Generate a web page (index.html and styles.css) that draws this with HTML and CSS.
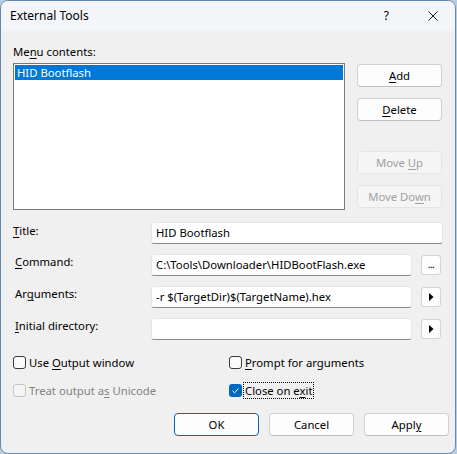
FILE: index.html
```html
<!DOCTYPE html>
<html>
<head>
<meta charset="utf-8">
<link rel="stylesheet" href="styles.css">
</head>
<body>
<div class="window">
  <div class="titlebar">
    <span class="title">External Tools</span>
    <span class="help">?</span>
    <span class="close"><svg width="10" height="10" viewBox="0 0 10 10"><path d="M0.5 0.5 L9.5 9.5 M9.5 0.5 L0.5 9.5" stroke="#1a1a1a" stroke-width="1" fill="none"/></svg></span>
  </div>
  <div class="content">
    <div class="top">
      <div class="listcol">
        <div class="label">Me<u>n</u>u contents:</div>
        <div class="listbox">
          <div class="item selected">HID Bootflash</div>
        </div>
      </div>
      <div class="sidebuttons">
        <div class="btn"><span><u>A</u>dd</span></div>
        <div class="btn"><span><u>D</u>elete</span></div>
        <div class="btn disabled gap-big"><span>Move <u>U</u>p</span></div>
        <div class="btn disabled"><span>Move Do<u>w</u>n</span></div>
      </div>
    </div>
    <div class="fields">
      <div class="flabel first"><u>T</u>itle:</div>
      <div class="input wide">HID Bootflash</div>
      <div class="flabel"><u>C</u>ommand:</div>
      <div class="input">C:\Tools\Downloader\HIDBootFlash.exe</div>
      <div class="minibtn dots">...</div>
      <div class="flabel">Ar<u>g</u>uments:</div>
      <div class="input">-r $(TargetDir)$(TargetName).hex</div>
      <div class="minibtn"><svg width="5" height="8" viewBox="0 0 5 8"><polygon points="0,0 4.5,4 0,8" fill="#000"/></svg></div>
      <div class="flabel"><u>I</u>nitial directory:</div>
      <div class="input"></div>
      <div class="minibtn"><svg width="5" height="8" viewBox="0 0 5 8"><polygon points="0,0 4.5,4 0,8" fill="#000"/></svg></div>
    </div>
    <div class="checks">
      <div class="check"><span class="box"></span><span class="ctext">Use <u>O</u>utput window</span></div>
      <div class="check"><span class="box"></span><span class="ctext"><u>P</u>rompt for arguments</span></div>
      <div class="check disabled"><span class="box"></span><span class="ctext">Treat output a<u>s</u> Unicode</span></div>
      <div class="check checked"><span class="box"><svg width="13" height="13" viewBox="0 0 13 13"><path d="M3.5 6.8 L5.6 8.8 L9.5 4.5" stroke="#fff" stroke-width="1" fill="none"/></svg></span><span class="ctext focus">Close on e<u>x</u>it</span></div>
    </div>
    <div class="footer">
      <div class="btn default"><span>OK</span></div>
      <div class="btn"><span>Cancel</span></div>
      <div class="btn"><span>Appl<u>y</u></span></div>
    </div>
  </div>
</div>
</body>
</html>
```
FILE: styles.css
```css
html, body {
  margin: 0;
  padding: 0;
}
body {
  background: #b9cde2;
  width: 457px;
  height: 454px;
  font-family: "Noto Sans", "Open Sans", sans-serif;
  font-size: 11.3px;
  color: #000;
}
u {
  text-decoration-thickness: 1px;
  text-underline-offset: 2px;
}
.window {
  box-sizing: border-box;
  width: 456px;
  height: 454px;
  border: 1px solid #6488b0;
  border-radius: 8px;
  overflow: hidden;
  background: #f0f0f0;
  display: flex;
  flex-direction: column;
}
.titlebar {
  height: 30px;
  background: #f3f5f9;
  display: flex;
  align-items: center;
  flex: none;
}
.title {
  margin-left: 9px;
  font-size: 12px;
  margin-top: -2px;
}
.help {
  margin-left: auto;
  font-size: 12px;
  margin-top: -2px;
}
.close {
  width: 10px;
  height: 10px;
  margin-left: 39px;
  margin-right: 17px;
  margin-top: -1px;
  display: flex;
}
.content {
  padding: 13px 11px 0 12px;
}
.top {
  display: flex;
  gap: 12px;
}
.listcol {
  width: 332px;
}
.label {
  line-height: 15px;
  height: 15px;
}
.listbox {
  box-sizing: border-box;
  margin-top: 4px;
  height: 147px;
  border: 1px solid #7a7a7a;
  background: #fff;
  padding: 1px;
}
.item {
  height: 15px;
  line-height: 15px;
  padding-left: 2px;
}
.item.selected {
  background: #0078d7;
  color: #fff;
}
.sidebuttons {
  padding-top: 20px;
  display: flex;
  flex-direction: column;
  gap: 11px;
}
.btn {
  box-sizing: border-box;
  width: 85px;
  height: 23px;
  border: 1px solid #d0d0d0;
  border-bottom-color: #bfbfbf;
  border-radius: 4px;
  background: #fdfdfd;
  display: flex;
  align-items: center;
  justify-content: center;
  line-height: 15px;
  padding-bottom: 1px;
  white-space: pre;
}
.btn.disabled {
  background: #f5f5f5;
  border-color: #e5e5e5;
  color: #a0a0a0;
}
.btn.gap-big {
  margin-top: 19px;
}
.fields {
  margin-top: 12px;
  display: grid;
  grid-template-columns: 138px 261px 31px;
  grid-auto-rows: 22px;
  row-gap: 10px;
}
.flabel {
  grid-column: 1;
  line-height: 15px;
  padding-top: 0px;
  padding-left: 2px;
}
.flabel.first {
  padding-left: 0;
  padding-top: 1px;
}
.input {
  box-sizing: border-box;
  grid-column: 2;
  background: #fff;
  border: 1px solid #e6e6e6;
  border-bottom: 1px solid #8a8a8a;
  border-radius: 3px;
  padding-left: 4px;
  line-height: 19px;
  white-space: nowrap;
  overflow: hidden;
}
.input.wide {
  grid-column: 2 / 4;
  width: 292px;
}
.minibtn {
  grid-column: 3;
  box-sizing: border-box;
  width: 20px;
  height: 20px;
  margin-left: 9px;
  margin-top: 1px;
  border: 1px solid #d3d3d3;
  border-radius: 3px;
  background: #fdfdfd;
  display: flex;
  align-items: center;
  justify-content: center;
}
.minibtn svg {
  margin-left: 1px;
}
.minibtn.dots {
  align-items: flex-end;
  line-height: 11px;
  font-size: 10px;
  padding-bottom: 4px;
  letter-spacing: -0.5px;
}
.checks {
  margin-top: 14px;
  display: grid;
  grid-template-columns: 216px 1fr;
  row-gap: 11px;
}
.check {
  display: flex;
  align-items: center;
  height: 17px;
}
.box {
  box-sizing: border-box;
  width: 13px;
  height: 13px;
  border: 1px solid #3a3a3a;
  border-radius: 3px;
  background: #fafafa;
  flex: none;
  display: flex;
}
.check.disabled .box {
  border-color: #c6c6c6;
  background: #f5f5f5;
}
.check.disabled .ctext {
  color: #838383;
}
.check.checked .box {
  border: none;
  background: #0067c0;
}
.ctext {
  margin-left: 3px;
  line-height: 15px;
  white-space: nowrap;
}
.ctext.focus {
  margin-left: 2px;
  padding: 0 0 0 1px;
  outline: 1px dotted #000;
  outline-offset: 0;
  border: 0;
}
.footer {
  margin-top: 14px;
  display: flex;
  justify-content: flex-end;
  gap: 10px;
  margin-right: -5px;
}
.btn.default {
  border: 1px solid #0067c0;
}
```
